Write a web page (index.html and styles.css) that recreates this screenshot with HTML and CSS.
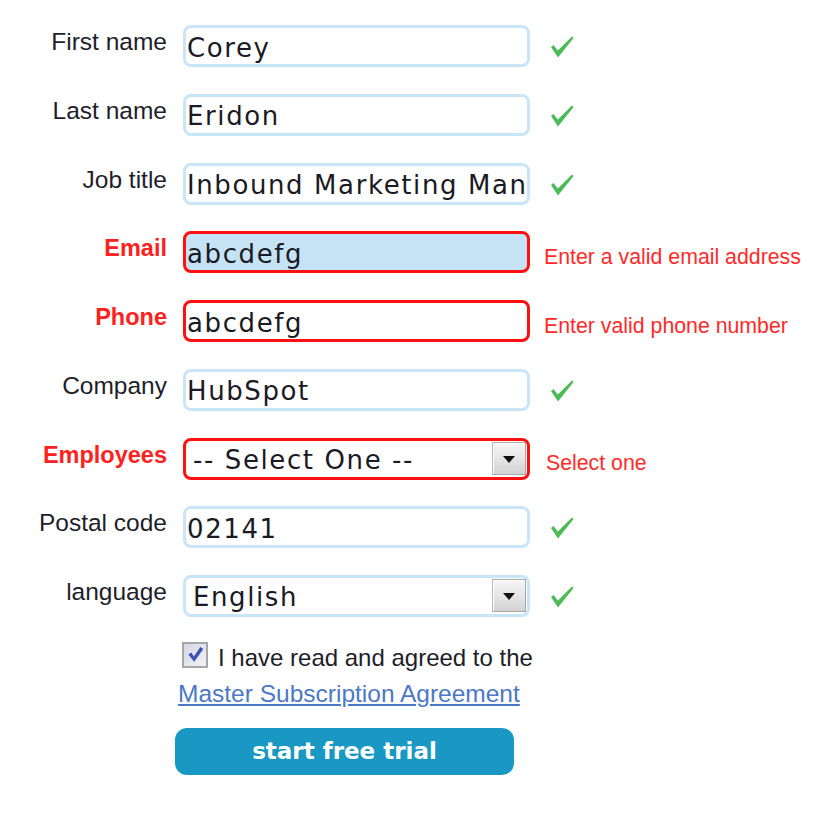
FILE: index.html
```html
<!DOCTYPE html>
<html lang="en">
<head>
    <meta charset="UTF-8" />
    <title>Start your free trial</title>
    <link rel="stylesheet" href="styles.css">
</head>
<body>
    <form class="signup">
        <div class="row">
            <label class="label">First name</label>
            <input class="field" type="text" value="Corey">
            <span class="status ok"><svg viewBox="0 0 24 22"><path d="M1 11 L3.5 9 L7.8 14.6 L22 0.6 L23.6 2 L8 21.5 Z"/></svg></span>
        </div>
        <div class="row">
            <label class="label">Last name</label>
            <input class="field" type="text" value="Eridon">
            <span class="status ok"><svg viewBox="0 0 24 22"><path d="M1 11 L3.5 9 L7.8 14.6 L22 0.6 L23.6 2 L8 21.5 Z"/></svg></span>
        </div>
        <div class="row">
            <label class="label">Job title</label>
            <input class="field" type="text" value="Inbound Marketing Manager">
            <span class="status ok"><svg viewBox="0 0 24 22"><path d="M1 11 L3.5 9 L7.8 14.6 L22 0.6 L23.6 2 L8 21.5 Z"/></svg></span>
        </div>
        <div class="row invalid">
            <label class="label">Email</label>
            <input class="field focused" type="text" value="abcdefg">
            <span class="status error">Enter a valid email address</span>
        </div>
        <div class="row invalid">
            <label class="label">Phone</label>
            <input class="field" type="text" value="abcdefg">
            <span class="status error">Enter valid phone number</span>
        </div>
        <div class="row">
            <label class="label">Company</label>
            <input class="field" type="text" value="HubSpot">
            <span class="status ok"><svg viewBox="0 0 24 22"><path d="M1 11 L3.5 9 L7.8 14.6 L22 0.6 L23.6 2 L8 21.5 Z"/></svg></span>
        </div>
        <div class="row invalid">
            <label class="label">Employees</label>
            <div class="select field">
                <select>
                    <option>-- Select One --</option>
                </select>
                <span class="select-btn"><i></i></span>
            </div>
            <span class="status error select-error">Select one</span>
        </div>
        <div class="row">
            <label class="label">Postal code</label>
            <input class="field" type="text" value="02141">
            <span class="status ok"><svg viewBox="0 0 24 22"><path d="M1 11 L3.5 9 L7.8 14.6 L22 0.6 L23.6 2 L8 21.5 Z"/></svg></span>
        </div>
        <div class="row">
            <label class="label">language</label>
            <div class="select field">
                <select>
                    <option>English</option>
                </select>
                <span class="select-btn"><i></i></span>
            </div>
            <span class="status ok"><svg viewBox="0 0 24 22"><path d="M1 11 L3.5 9 L7.8 14.6 L22 0.6 L23.6 2 L8 21.5 Z"/></svg></span>
        </div>

        <div class="agree">
            <p class="agree-line">
                <span class="checkbox"><svg viewBox="0 0 20 20"><path d="M2.5 10 L5.5 8 L8.3 12 L15 2 L18.2 4.2 L8.6 17.5 Z"/></svg></span>
                <span class="agree-text">I have read and agreed to the</span>
            </p>
            <a class="agree-link" href="#">Master Subscription Agreement</a>
            <button class="submit" type="button">start free trial</button>
        </div>
    </form>
</body>
</html>
```

FILE: styles.css
```css
* {
    margin: 0;
    padding: 0;
    box-sizing: border-box;
}

body {
    background: #fff;
    font-family: "Liberation Sans", Arial, sans-serif;
    color: #222;
}

.signup {
    padding-top: 25px;
}

.row {
    display: flex;
    align-items: flex-start;
    height: 42px;
    margin-bottom: 26.75px;
}

.label {
    width: 167px;
    flex: none;
    padding-top: 3px;
    text-align: right;
    font-size: 24.5px;
    color: #1e1e2a;
}

.invalid .label {
    color: #ff2020;
    font-weight: bold;
    font-size: 23.5px;
    padding-top: 4px;
}

.field {
    width: 347px;
    height: 42px;
    flex: none;
    margin-left: 16px;
    border: 3px solid #c9e5f8;
    border-radius: 8px;
    background: #fff;
    font-family: "DejaVu Sans", Verdana, sans-serif;
    font-size: 26px;
    letter-spacing: 1.6px;
    color: #1a1a24;
    padding: 3px 0 0 1px;
    outline: none;
}

.invalid .field {
    border-color: #ff1010;
}

.field.focused {
    background: #c6e3f6;
}

.select {
    position: relative;
    padding: 0;
}

.select select {
    appearance: none;
    -webkit-appearance: none;
    width: 100%;
    height: 100%;
    border: none;
    background: transparent;
    font: inherit;
    letter-spacing: inherit;
    color: inherit;
    padding: 2px 0 0 7px;
    outline: none;
}

.select-btn {
    position: absolute;
    top: 1px;
    right: 1px;
    bottom: 2px;
    width: 34px;
    border: 1px solid #a8a8a8;
    border-left-color: #b8b8b8;
    background: linear-gradient(#f6f6f6, #e4e4e4 55%, #d2d2d2);
    box-shadow: inset 1px 1px 0 #fff;
    display: flex;
    align-items: center;
    justify-content: center;
    pointer-events: none;
}

.select-btn i {
    width: 0;
    height: 0;
    border-left: 6px solid transparent;
    border-right: 6px solid transparent;
    border-top: 7px solid #111;
    margin-top: 2px;
}

.status {
    margin-left: 14px;
}

.ok svg {
    display: block;
    width: 24px;
    height: 22px;
    margin: 11px 0 0 6px;
    fill: #4dbb55;
}

.error {
    padding-top: 14px;
    font-size: 21.3px;
    color: #ff2a2a;
}

.select-error {
    padding-top: 13px;
    margin-left: 16px;
}

.agree {
    margin-top: -2px;
    padding-left: 175px;
}

.agree-line {
    display: flex;
    align-items: flex-start;
    font-size: 24px;
    line-height: 28px;
    color: #1e1e2a;
    padding-left: 7px;
}

.agree-text {
    padding-top: 2px;
}

.checkbox {
    width: 26px;
    height: 26px;
    margin-right: 10px;
    border: 2px solid #a6a6a6;
    background: linear-gradient(135deg, #d6d6e4, #f2f2f8);
    display: flex;
    align-items: center;
    justify-content: center;
}

.checkbox svg {
    width: 19px;
    height: 19px;
    fill: #3954b0;
}

.agree-link {
    display: inline-block;
    margin-top: 8px;
    margin-left: 3px;
    font-size: 24.5px;
    color: #4b78c6;
    text-decoration: underline;
}

.submit {
    display: block;
    width: 339px;
    height: 47px;
    margin-top: 20px;
    border: none;
    border-radius: 12px;
    background: #1898c2;
    color: #fff;
    font-family: "DejaVu Sans", Verdana, sans-serif;
    font-weight: bold;
    font-size: 23px;
    cursor: pointer;
}
```
